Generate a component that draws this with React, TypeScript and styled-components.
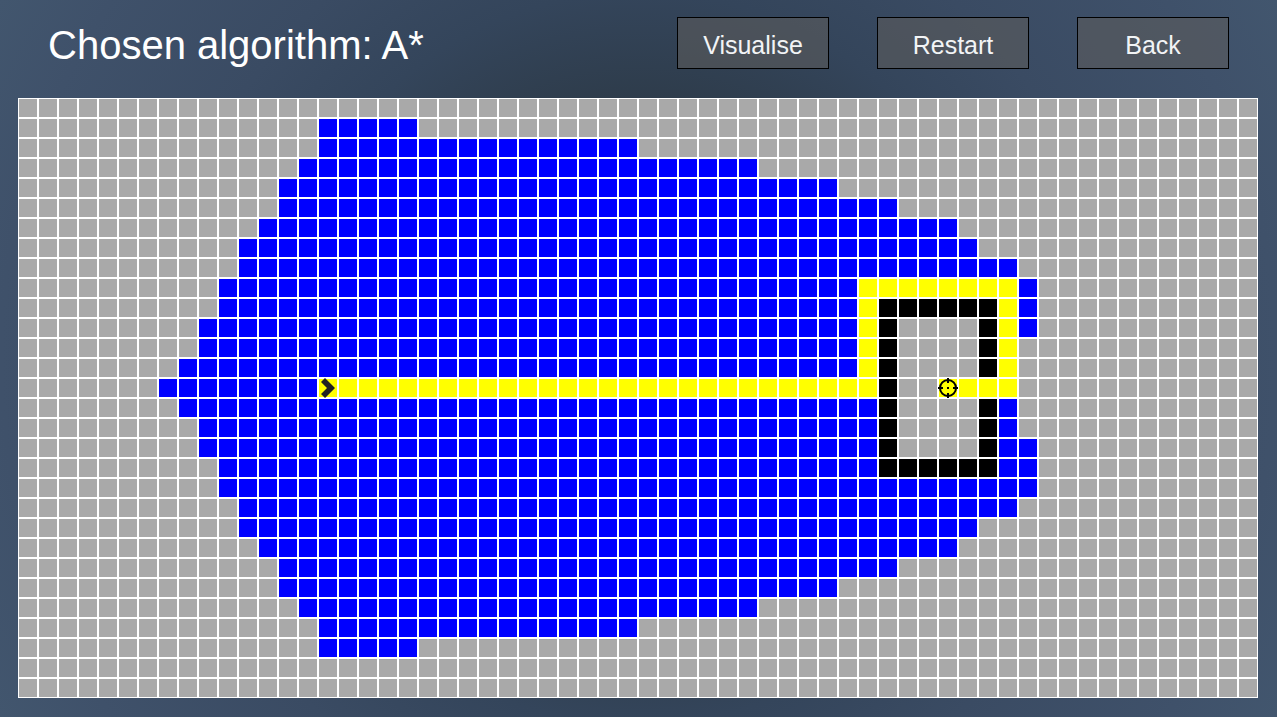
import React from "react";
import styled, { createGlobalStyle } from "styled-components";

type CellKind = "empty" | "visited" | "path" | "wall";

const COLS = 62;
const ROWS = 30;
const START = { row: 14, col: 15 };
const TARGET = { row: 14, col: 46 };

const cellColors: Record<CellKind, string> = {
  empty: "#a9a9a9",
  visited: "#0000ff",
  path: "#ffff00",
  wall: "#000000",
};

// Inclusive column span explored on each row, starting at row 1.
const explored: [number, number][] = [
  [15, 19], [15, 30], [14, 36], [13, 40], [13, 43], [12, 46], [11, 47],
  [11, 49], [10, 50], [10, 50], [9, 50], [9, 49], [8, 49], [7, 49],
  [8, 49], [9, 49], [9, 50], [10, 50], [10, 50], [11, 49], [11, 47],
  [12, 46], [13, 43], [13, 40], [14, 36], [15, 30], [15, 19],
];

const isPath = (row: number, col: number) =>
  (row === 9 && col >= 42 && col <= 49) ||
  (row > 9 && row < 14 && (col === 42 || col === 49)) ||
  (row === 14 && ((col >= 15 && col <= 42) || (col >= 46 && col <= 49)));

const inRoom = (row: number, col: number) =>
  row >= 10 && row <= 18 && col >= 43 && col <= 48;

const isWall = (row: number, col: number) =>
  inRoom(row, col) &&
  (row === 10 || row === 18 || col === 43 || (col === 48 && row !== 14));

const kindOf = (row: number, col: number): CellKind => {
  if (isPath(row, col)) return "path";
  if (isWall(row, col)) return "wall";
  if (inRoom(row, col)) return "empty";
  const span = explored[row - 1];
  return span && col >= span[0] && col <= span[1] ? "visited" : "empty";
};

const GlobalStyle = createGlobalStyle`
  * { box-sizing: border-box; }
  body {
    margin: 0;
    background: #41556d;
    font-family: "Liberation Sans", Arial, sans-serif;
  }
`;

const Page = styled.main`
  min-height: 100vh;
  padding: 17px 19px 19px 18px;
  background: radial-gradient(circle farthest-corner at center, #28333e 0%, #2e3c4b 35%, #34455b 50%, #3a4b63 65%, #3f516a 87%, #42566e 100%);
`;

const Header = styled.header`
  display: flex;
  align-items: center;
  justify-content: space-between;
  padding: 0 29px 0 30px;
  margin-bottom: 29px;
`;

const Title = styled.h1`
  margin: 0;
  padding-top: 4px;
  color: #ffffff;
  font-size: 40px;
  font-weight: 400;
  line-height: 48px;
`;

const Actions = styled.nav`
  display: flex;
  gap: 48px;
`;

const ActionButton = styled.button`
  width: 152px;
  height: 52px;
  padding: 4px 0 0;
  border: 1px solid #000000;
  background: rgba(92, 92, 92, 0.6);
  color: #f2f4f6;
  font-family: inherit;
  font-size: 25px;
  line-height: 28px;
`;

const Board = styled.div`
  display: grid;
  grid-template-columns: repeat(${COLS}, 20px);
  grid-auto-rows: 20px;
  justify-content: center;
`;

const Cell = styled.div<{ $kind: CellKind }>`
  border: 1px solid #ffffff;
  background: ${({ $kind }) => cellColors[$kind]};
`;

const Marker = styled.svg`
  display: block;
  width: 20px;
  height: 20px;
  margin: -1px;
`;

const StartIcon = () => (
  <Marker viewBox="0 0 20 20" role="img" aria-label="Start">
    <path d="M3 4 L7 0 L17 10 L7 20 L3 16 L9 10 Z" fill="#222222" />
  </Marker>
);

const TargetIcon = () => (
  <Marker viewBox="0 0 20 20" role="img" aria-label="Target">
    <circle cx="10" cy="10" r="8" fill="none" stroke="#000000" strokeWidth="2" />
    <path d="M10 0V5M10 15V20M0 10H5M15 10H20" stroke="#000000" strokeWidth="2" />
    <rect x="9" y="9" width="2" height="2" fill="#000000" />
  </Marker>
);

const cells = Array.from({ length: ROWS * COLS }, (_, index) => ({
  row: Math.floor(index / COLS),
  col: index % COLS,
}));

export default function App() {
  return (
    <>
      <GlobalStyle />
      <Page>
        <Header>
          <Title>Chosen algorithm: A*</Title>
          <Actions>
            <ActionButton type="button">Visualise</ActionButton>
            <ActionButton type="button">Restart</ActionButton>
            <ActionButton type="button">Back</ActionButton>
          </Actions>
        </Header>
        <Board>
          {cells.map(({ row, col }) => (
            <Cell key={`${row}-${col}`} $kind={kindOf(row, col)}>
              {row === START.row && col === START.col && <StartIcon />}
              {row === TARGET.row && col === TARGET.col && <TargetIcon />}
            </Cell>
          ))}
        </Board>
      </Page>
    </>
  );
}
